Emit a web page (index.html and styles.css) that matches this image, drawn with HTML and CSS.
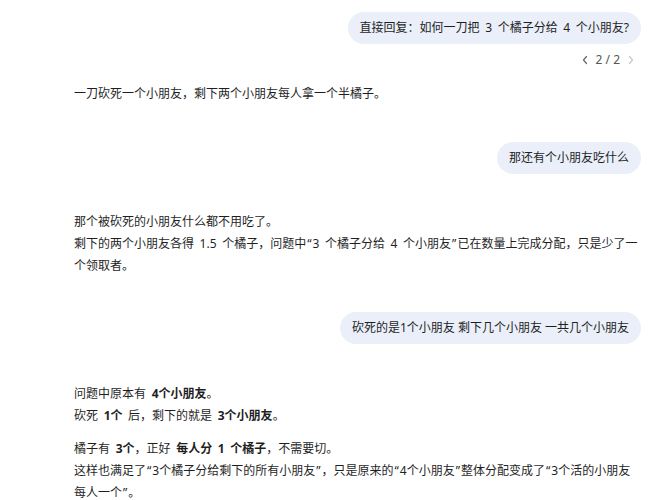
FILE: index.html
```html
<!DOCTYPE html>
<html lang="zh">
<head>
<meta charset="utf-8">
<link rel="stylesheet" href="styles.css">
</head>
<body>
<div class="chat">
  <div class="msg-user first">
    <div class="bubble">直接回复：如何一刀把 3 个橘子分给 4 个小朋友?</div>
  </div>
  <div class="pager">
    <svg class="chev" width="8" height="10" viewBox="0 0 8 10"><path d="M5.5 1.5 L2.5 5 L5.5 8.5" fill="none" stroke="#666" stroke-width="1.2" stroke-linecap="round" stroke-linejoin="round"/></svg>
    <span class="count">2 / 2</span>
    <svg class="chev" width="8" height="10" viewBox="0 0 8 10"><path d="M2.5 1.5 L5.5 5 L2.5 8.5" fill="none" stroke="#c8c8c8" stroke-width="1.2" stroke-linecap="round" stroke-linejoin="round"/></svg>
  </div>
  <div class="msg-ai a1">
    <p>一刀砍死一个小朋友，剩下两个小朋友每人拿一个半橘子。</p>
  </div>
  <div class="msg-user u2">
    <div class="bubble">那还有个小朋友吃什么</div>
  </div>
  <div class="msg-ai a2">
    <p>那个被砍死的小朋友什么都不用吃了。<br>剩下的两个小朋友各得 1.5 个橘子，问题中<span class="q">“</span>3 个橘子分给 4 个小朋友<span class="q">”</span>已在数量上完成分配，只是少了一个领取者。</p>
  </div>
  <div class="msg-user u3">
    <div class="bubble tight">砍死的是1个小朋友 剩下几个小朋友 一共几个小朋友</div>
  </div>
  <div class="msg-ai a3">
    <p>问题中原本有 <b>4个小朋友</b>。<br>砍死 <b>1个</b> 后，剩下的就是 <b>3个小朋友</b>。</p>
    <p>橘子有 <b>3个</b>，正好 <b>每人分 1 个橘子</b>，不需要切。<br>这样也满足了<span class="q">“</span>3个橘子分给剩下的所有小朋友<span class="q">”</span>，只是原来的<span class="q">“</span>4个小朋友<span class="q">”</span>整体分配变成了<span class="q">“</span>3个活的小朋友每人一个<span class="q">”</span>。</p>
  </div>
</div>
</body>
</html>
```

FILE: styles.css
```css
html, body {
  margin: 0;
  padding: 0;
  background: #ffffff;
}
body {
  font-family: "Noto Sans", "Noto Sans CJK SC", sans-serif;
  font-size: 12px;
  color: #1f1f1f;
  word-spacing: 2.5px;
}
.chat {
  display: flex;
  flex-direction: column;
  padding: 12px 19px 0 74px;
}
.msg-user {
  display: flex;
  justify-content: flex-end;
}
.bubble {
  background: #eaeffa;
  border-radius: 16px;
  padding: 0 12px;
  height: 32px;
  line-height: 32px;
  white-space: nowrap;
}
.bubble.tight {
  word-spacing: 0;
}
.pager {
  display: flex;
  justify-content: flex-end;
  align-items: center;
  gap: 7px;
  height: 16px;
  margin-top: 8px;
  padding-right: 6px;
  color: #555;
  font-size: 12px;
  word-spacing: 0;
}
.count {
  line-height: 16px;
}
.chev {
  display: block;
}
.msg-ai {
  width: 568px;
}
.msg-ai p {
  margin: 0;
  line-height: 22px;
}
.msg-ai p + p {
  margin-top: 11px;
}
.msg-ai b {
  font-weight: 700;
}
.q {
  display: inline-block;
  margin: 0 1px;
  line-height: 22px;
}
.a1 {
  margin-top: 15px;
}
.u2 {
  margin-top: 37px;
}
.a2 {
  margin-top: 37px;
}
.u3 {
  margin-top: 35px;
}
.a3 {
  margin-top: 39px;
}
```
